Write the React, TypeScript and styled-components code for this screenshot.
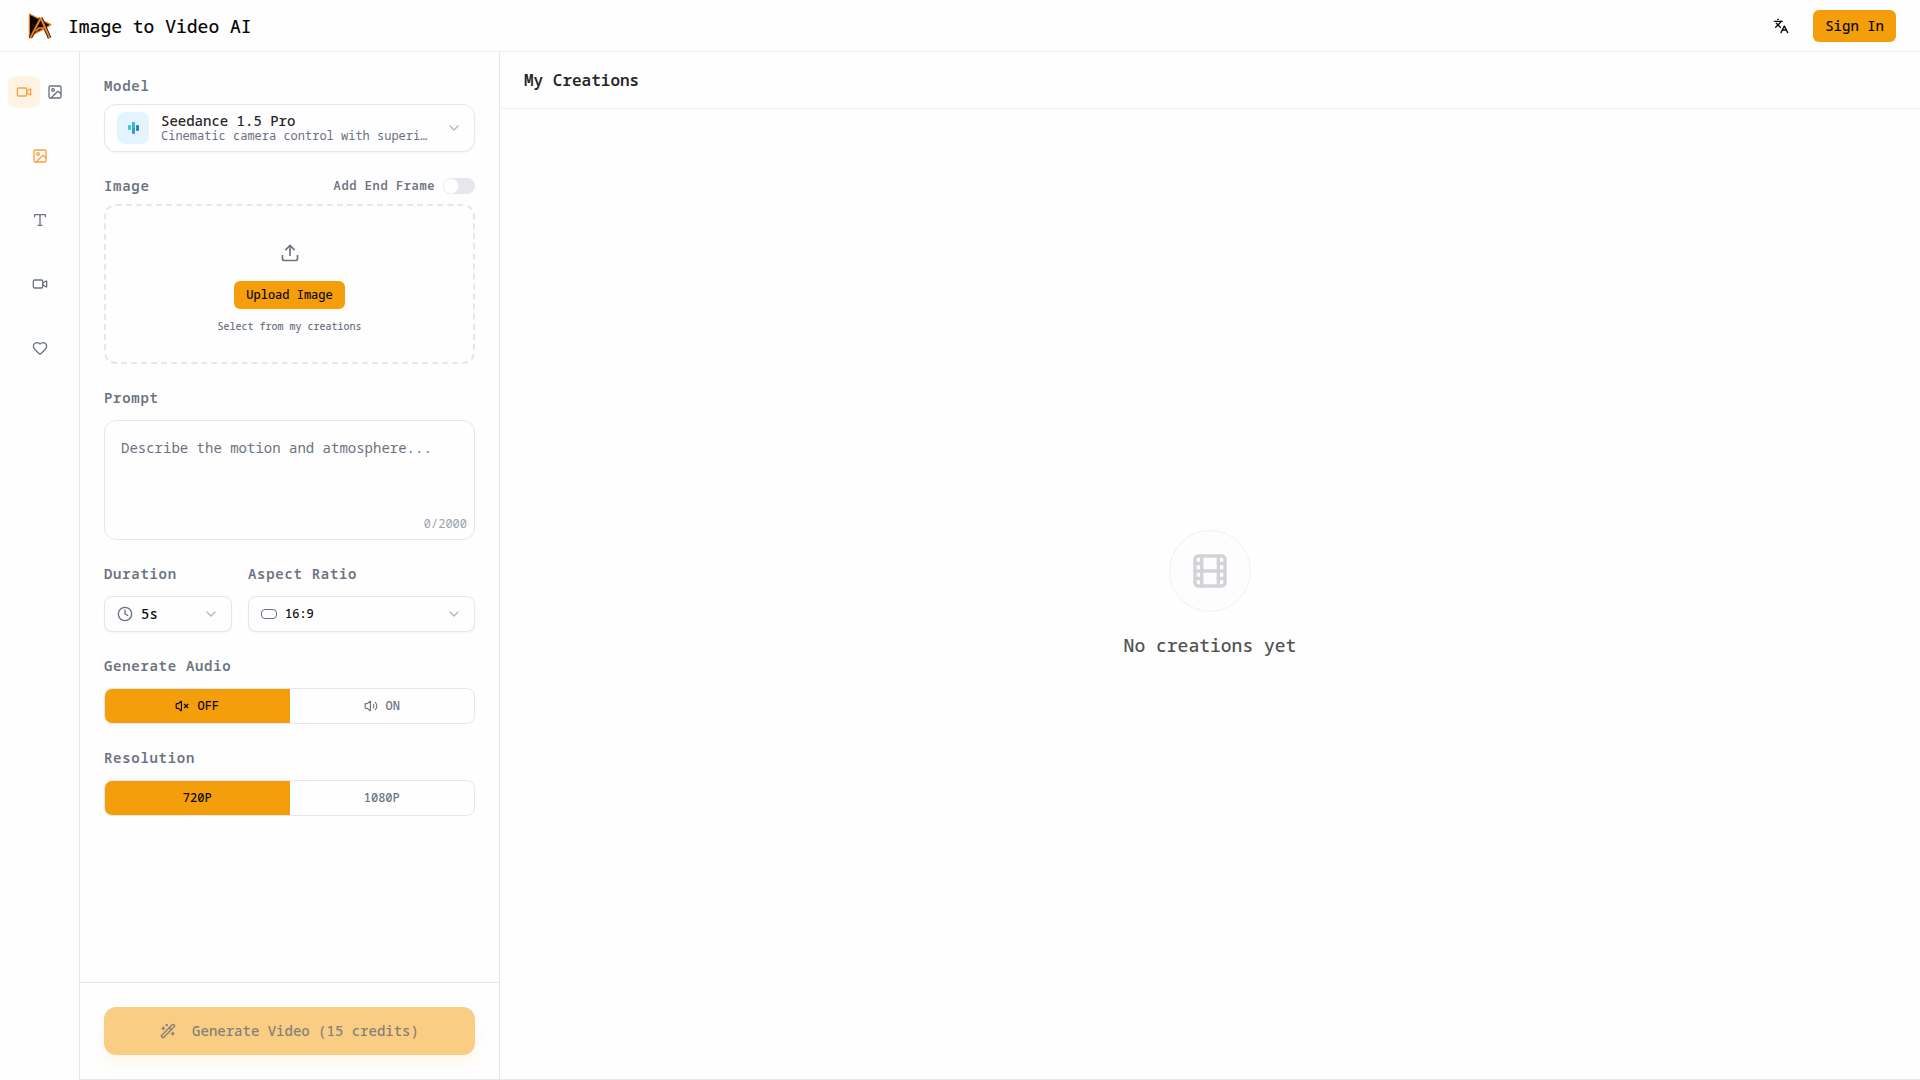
import React, { useState } from "react";
import styled, { createGlobalStyle, css } from "styled-components";
import {
  ChevronDown,
  Clock,
  Film,
  Heart,
  Image as ImageIcon,
  Languages,
  Type,
  Upload,
  Video,
  Volume2,
  VolumeX,
  WandSparkles,
} from "lucide-react";

const color = {
  page: "#fefefe",
  line: "#e5e7eb",
  faintLine: "#f0f1f3",
  accent: "#f59e0b",
  accentText: "#fb9f40",
  accentSoft: "#fff3e3",
  ink: "#0a0a0a",
  text: "#262626",
  muted: "#6b7280",
  soft: "#9ca3af",
};

const GlobalStyle = createGlobalStyle`
  *, *::before, *::after { box-sizing: border-box; }
  body { margin: 0; background: ${color.page}; }
  body, button, input, select, textarea {
    font-family: "Noto Sans Mono", "DejaVu Sans Mono", monospace;
  }
  button { cursor: pointer; }
  h1, h2, p { margin: 0; }
`;

const Shell = styled.div`
  display: flex;
  flex-direction: column;
  min-height: 100vh;
  color: ${color.text};
`;

const TopBar = styled.header`
  display: flex;
  align-items: center;
  justify-content: space-between;
  height: 52px;
  padding: 0 24px;
  border-bottom: 1px solid ${color.faintLine};
`;

const Brand = styled.a`
  display: flex;
  align-items: center;
  gap: 12px;
  color: ${color.ink};
  text-decoration: none;
`;

const BrandName = styled.h1`
  font-size: 18px;
  line-height: 28px;
  font-weight: 500;
`;

const TopActions = styled.div`
  display: flex;
  align-items: center;
  gap: 16px;
`;

const IconButton = styled.button`
  display: grid;
  place-items: center;
  width: 32px;
  height: 32px;
  padding: 0;
  border: 0;
  background: transparent;
  color: ${color.ink};
`;

const AccentButton = styled.button<{ $small?: boolean }>`
  height: ${(p) => (p.$small ? 28 : 32)}px;
  padding: 0 12px;
  border: 0;
  border-radius: 6px;
  background: ${color.accent};
  color: ${color.ink};
  font-size: ${(p) => (p.$small ? 12 : 14)}px;
  line-height: ${(p) => (p.$small ? 16 : 20)}px;
  font-weight: 500;
`;

const Body = styled.div`
  display: flex;
  flex: 1;
`;

const Rail = styled.nav`
  display: flex;
  flex-direction: column;
  align-items: center;
  gap: 32px;
  width: 79px;
  padding: 24px 8px;
`;

const RailPair = styled.div`
  display: grid;
  grid-template-columns: 1fr 1fr;
  width: 100%;
`;

const RailLink = styled.a<{ $active?: boolean; $filled?: boolean }>`
  display: grid;
  place-items: center;
  height: 32px;
  min-width: 31px;
  border-radius: 8px;
  color: ${(p) => (p.$active ? color.accentText : color.muted)};
  background: ${(p) => (p.$filled ? color.accentSoft : "transparent")};
`;

const Work = styled.main`
  display: flex;
  flex: 1;
  min-width: 0;
  border-left: 1px solid ${color.line};
  border-bottom: 1px solid ${color.line};
`;

const Panel = styled.form`
  display: flex;
  flex-direction: column;
  flex: none;
  width: 420px;
  border-right: 1px solid ${color.line};
`;

const Fields = styled.div`
  display: flex;
  flex-direction: column;
  flex: 1;
  gap: 24px;
  padding: 24px;
`;

const Field = styled.div<{ $tight?: boolean }>`
  display: flex;
  flex-direction: column;
  gap: ${(p) => (p.$tight ? 8 : 12)}px;
  min-width: 0;
`;

const labelText = css`
  color: ${color.muted};
  font-size: 14px;
  line-height: 20px;
  font-weight: 600;
  letter-spacing: 0.05em;
`;

const Label = styled.label`
  ${labelText}
`;

const GroupLabel = styled.span`
  ${labelText}
`;

const LabelRow = styled.div`
  display: flex;
  align-items: center;
  justify-content: space-between;
`;

const SwitchLabel = styled.label`
  display: flex;
  align-items: center;
  gap: 8px;
  color: ${color.muted};
  font-size: 12px;
  line-height: 16px;
  font-weight: 600;
  letter-spacing: 0.05em;
`;

const Switch = styled.input`
  appearance: none;
  display: flex;
  width: 32px;
  height: 16px;
  margin: 0;
  border-radius: 8px;
  background: ${color.line};
  &::before {
    content: "";
    width: 16px;
    height: 16px;
    border: 1px solid ${color.faintLine};
    border-radius: 50%;
    background: #fff;
  }
  &:checked {
    justify-content: flex-end;
    background: ${color.accent};
  }
`;

const surface = css`
  border: 1px solid ${color.line};
  background: ${color.page};
`;

const ModelButton = styled.button`
  ${surface}
  display: flex;
  align-items: center;
  gap: 12px;
  height: 48px;
  padding: 0 12px;
  border-radius: 12px;
  box-shadow: 0 1px 2px rgba(0, 0, 0, 0.05);
  text-align: left;
`;

const ModelBadge = styled.span`
  display: grid;
  place-items: center;
  flex: none;
  width: 32px;
  height: 32px;
  border-radius: 8px;
  background: #e3f4fe;
`;

const ModelInfo = styled.span`
  display: flex;
  flex-direction: column;
  flex: 1;
  min-width: 0;
`;

const ModelName = styled.span`
  color: ${color.text};
  font-size: 14px;
  line-height: 16px;
  font-weight: 500;
`;

const ModelNote = styled.span`
  color: ${color.muted};
  font-size: 12px;
  line-height: 14px;
  white-space: nowrap;
`;

const Chevron = styled(ChevronDown)`
  flex: none;
  color: #b4b8bf;
`;

const DropZone = styled.div`
  display: flex;
  flex-direction: column;
  align-items: center;
  justify-content: center;
  gap: 8px;
  height: 160px;
  border: 2px dashed ${color.line};
  border-radius: 12px;
  color: ${color.muted};
`;

const UploadMark = styled.span`
  display: grid;
  place-items: center;
  width: 40px;
  height: 40px;
`;

const TextButton = styled.button`
  padding: 0 8px;
  border: 0;
  background: transparent;
  color: ${color.muted};
  font-size: 10px;
  line-height: 18px;
  font-weight: 500;
`;

const PromptBox = styled.div`
  ${surface}
  display: flex;
  flex-direction: column;
  height: 120px;
  padding-bottom: 7px;
  border-radius: 12px;
`;

const PromptInput = styled.textarea`
  display: block;
  flex: 1;
  width: 100%;
  padding: 16px 16px 0;
  border: 0;
  outline: 0;
  resize: none;
  background: transparent;
  color: ${color.text};
  font-size: 14px;
  line-height: 22px;
  &::placeholder {
    color: ${color.muted};
  }
`;

const Counter = styled.span`
  padding-right: 7px;
  color: ${color.soft};
  font-size: 12px;
  line-height: 16px;
  text-align: right;
`;

const SelectColumns = styled.div`
  display: grid;
  grid-template-columns: 128px 1fr;
  gap: 16px;
`;

const SelectBox = styled.div`
  ${surface}
  display: flex;
  align-items: center;
  gap: 8px;
  height: 36px;
  padding: 0 12px;
  border-radius: 8px;
  box-shadow: 0 1px 2px rgba(0, 0, 0, 0.05);
  color: ${color.muted};
`;

const Select = styled.select<{ $small?: boolean }>`
  appearance: none;
  flex: 1;
  min-width: 0;
  padding: 0;
  border: 0;
  outline: 0;
  background: transparent;
  color: ${color.ink};
  font-size: ${(p) => (p.$small ? 12 : 14)}px;
  line-height: ${(p) => (p.$small ? 16 : 20)}px;
  font-weight: 500;
`;

const RatioShape = styled.span`
  flex: none;
  width: 16px;
  height: 10px;
  border: 1px solid ${color.muted};
  border-radius: 4px;
`;

const Segments = styled.div`
  ${surface}
  display: grid;
  grid-template-columns: 1fr 1fr;
  height: 36px;
  border-radius: 8px;
  overflow: hidden;
`;

const Segment = styled.button<{ $on: boolean }>`
  display: flex;
  align-items: center;
  justify-content: center;
  gap: 8px;
  padding: 0;
  border: 0;
  background: ${(p) => (p.$on ? color.accent : "transparent")};
  color: ${(p) => (p.$on ? color.ink : color.muted)};
  font-size: 12px;
  line-height: 16px;
  font-weight: 500;
`;

const Submit = styled.div`
  padding: 24px;
  border-top: 1px solid ${color.line};
`;

const GenerateButton = styled.button`
  display: flex;
  align-items: center;
  justify-content: center;
  gap: 16px;
  width: 100%;
  height: 48px;
  border: 0;
  border-radius: 12px;
  background: #facd84;
  box-shadow: 0 8px 14px rgba(245, 158, 11, 0.08);
  color: #828079;
  font-size: 14px;
  line-height: 20px;
  font-weight: 500;
`;

const Gallery = styled.section`
  display: flex;
  flex-direction: column;
  flex: 1;
  min-width: 0;
`;

const GalleryHead = styled.div`
  padding: 16px 24px;
  border-bottom: 1px solid ${color.faintLine};
`;

const GalleryTitle = styled.h2`
  font-size: 16px;
  line-height: 24px;
  font-weight: 600;
`;

const Empty = styled.div`
  display: flex;
  flex-direction: column;
  align-items: center;
  justify-content: center;
  flex: 1;
  gap: 20px;
`;

const EmptyMark = styled.span`
  display: grid;
  place-items: center;
  width: 82px;
  height: 82px;
  border: 1px solid ${color.faintLine};
  border-radius: 50%;
  background: #fdfdfe;
  color: #d1d3d8;
`;

const EmptyText = styled.p`
  color: #525252;
  font-size: 18px;
  line-height: 26px;
  font-weight: 500;
`;

const Logo = () => (
  <svg width="32" height="32" viewBox="0 0 32 32" aria-hidden="true">
    <path
      d="M5.4 4 26.8 14.6 22.4 17.6 10 24 5.4 28Z"
      fill="#0b0603"
      stroke="#ec7d1c"
      strokeWidth="1.3"
      strokeLinejoin="round"
    />
    <path d="M16.8 8 6.4 27.6M16.8 8 25.6 28" fill="none" stroke="#2a1204" strokeWidth="3.6" />
    <path d="M16.8 8 6.4 27.6M16.8 8 25.6 28" fill="none" stroke="#ea7f24" strokeWidth="1.9" strokeLinejoin="round" />
    <path d="M11.6 21.4 15 18.2 21.2 17.8" fill="none" stroke="#ea7f24" strokeWidth="1.7" />
  </svg>
);

const SoundBars = () => (
  <svg width="12" height="12" viewBox="0 0 12 12" aria-hidden="true">
    <rect x="1" y="3" width="3" height="5" rx="1" fill="#35cfc9" />
    <rect x="5" y="0" width="3" height="12" rx="1" fill="#2f9fc4" />
    <rect x="5" y="0" width="3" height="6" rx="1" fill="#36bcc4" />
    <rect x="9" y="3" width="3" height="6" rx="1" fill="#2b83c0" />
  </svg>
);

export default function App() {
  const [endFrame, setEndFrame] = useState(false);
  const [prompt, setPrompt] = useState("");
  const [audio, setAudio] = useState(false);
  const [resolution, setResolution] = useState("720P");

  return (
    <Shell>
      <GlobalStyle />
      <TopBar>
        <Brand href="#">
          <Logo />
          <BrandName>Image to Video AI</BrandName>
        </Brand>
        <TopActions>
          <IconButton type="button" aria-label="Language">
            <Languages size={16} />
          </IconButton>
          <AccentButton type="button">Sign In</AccentButton>
        </TopActions>
      </TopBar>
      <Body>
        <Rail>
          <RailPair>
            <RailLink href="#video" aria-label="Video tools" $active $filled>
              <Video size={16} />
            </RailLink>
            <RailLink href="#image" aria-label="Image tools">
              <ImageIcon size={16} />
            </RailLink>
          </RailPair>
          <RailLink href="#image-to-video" aria-label="Image to video" $active>
            <ImageIcon size={16} />
          </RailLink>
          <RailLink href="#text-to-video" aria-label="Text to video">
            <Type size={16} />
          </RailLink>
          <RailLink href="#video-to-video" aria-label="Video to video">
            <Video size={16} />
          </RailLink>
          <RailLink href="#favorites" aria-label="Favorites">
            <Heart size={16} />
          </RailLink>
        </Rail>
        <Work>
          <Panel onSubmit={(e) => e.preventDefault()}>
            <Fields>
              <Field $tight>
                <Label htmlFor="model">Model</Label>
                <ModelButton id="model" type="button" aria-haspopup="listbox">
                  <ModelBadge>
                    <SoundBars />
                  </ModelBadge>
                  <ModelInfo>
                    <ModelName>Seedance 1.5 Pro</ModelName>
                    <ModelNote>Cinematic camera control with superi…</ModelNote>
                  </ModelInfo>
                  <Chevron size={16} />
                </ModelButton>
              </Field>
              <Field $tight>
                <LabelRow>
                  <GroupLabel>Image</GroupLabel>
                  <SwitchLabel>
                    Add End Frame
                    <Switch
                      type="checkbox"
                      role="switch"
                      checked={endFrame}
                      onChange={(e) => setEndFrame(e.target.checked)}
                    />
                  </SwitchLabel>
                </LabelRow>
                <DropZone>
                  <UploadMark>
                    <Upload size={20} />
                  </UploadMark>
                  <AccentButton type="button" $small>
                    Upload Image
                  </AccentButton>
                  <TextButton type="button">Select from my creations</TextButton>
                </DropZone>
              </Field>
              <Field>
                <Label htmlFor="prompt">Prompt</Label>
                <PromptBox>
                  <PromptInput
                    id="prompt"
                    maxLength={2000}
                    placeholder="Describe the motion and atmosphere..."
                    value={prompt}
                    onChange={(e) => setPrompt(e.target.value)}
                  />
                  <Counter>{prompt.length}/2000</Counter>
                </PromptBox>
              </Field>
              <SelectColumns>
                <Field>
                  <Label htmlFor="duration">Duration</Label>
                  <SelectBox>
                    <Clock size={16} />
                    <Select id="duration" defaultValue="5s">
                      <option>5s</option>
                    </Select>
                    <Chevron size={16} />
                  </SelectBox>
                </Field>
                <Field>
                  <Label htmlFor="ratio">Aspect Ratio</Label>
                  <SelectBox>
                    <RatioShape />
                    <Select id="ratio" defaultValue="16:9" $small>
                      <option>16:9</option>
                    </Select>
                    <Chevron size={16} />
                  </SelectBox>
                </Field>
              </SelectColumns>
              <Field>
                <GroupLabel id="audio-label">Generate Audio</GroupLabel>
                <Segments role="group" aria-labelledby="audio-label">
                  <Segment type="button" $on={!audio} aria-pressed={!audio} onClick={() => setAudio(false)}>
                    <VolumeX size={14} />
                    OFF
                  </Segment>
                  <Segment type="button" $on={audio} aria-pressed={audio} onClick={() => setAudio(true)}>
                    <Volume2 size={14} />
                    ON
                  </Segment>
                </Segments>
              </Field>
              <Field>
                <GroupLabel id="resolution-label">Resolution</GroupLabel>
                <Segments role="group" aria-labelledby="resolution-label">
                  {["720P", "1080P"].map((r) => (
                    <Segment
                      key={r}
                      type="button"
                      $on={resolution === r}
                      aria-pressed={resolution === r}
                      onClick={() => setResolution(r)}
                    >
                      {r}
                    </Segment>
                  ))}
                </Segments>
              </Field>
            </Fields>
            <Submit>
              <GenerateButton type="submit" disabled>
                <WandSparkles size={16} />
                Generate Video (15 credits)
              </GenerateButton>
            </Submit>
          </Panel>
          <Gallery>
            <GalleryHead>
              <GalleryTitle>My Creations</GalleryTitle>
            </GalleryHead>
            <Empty>
              <EmptyMark>
                <Film size={40} />
              </EmptyMark>
              <EmptyText>No creations yet</EmptyText>
            </Empty>
          </Gallery>
        </Work>
      </Body>
    </Shell>
  );
}
